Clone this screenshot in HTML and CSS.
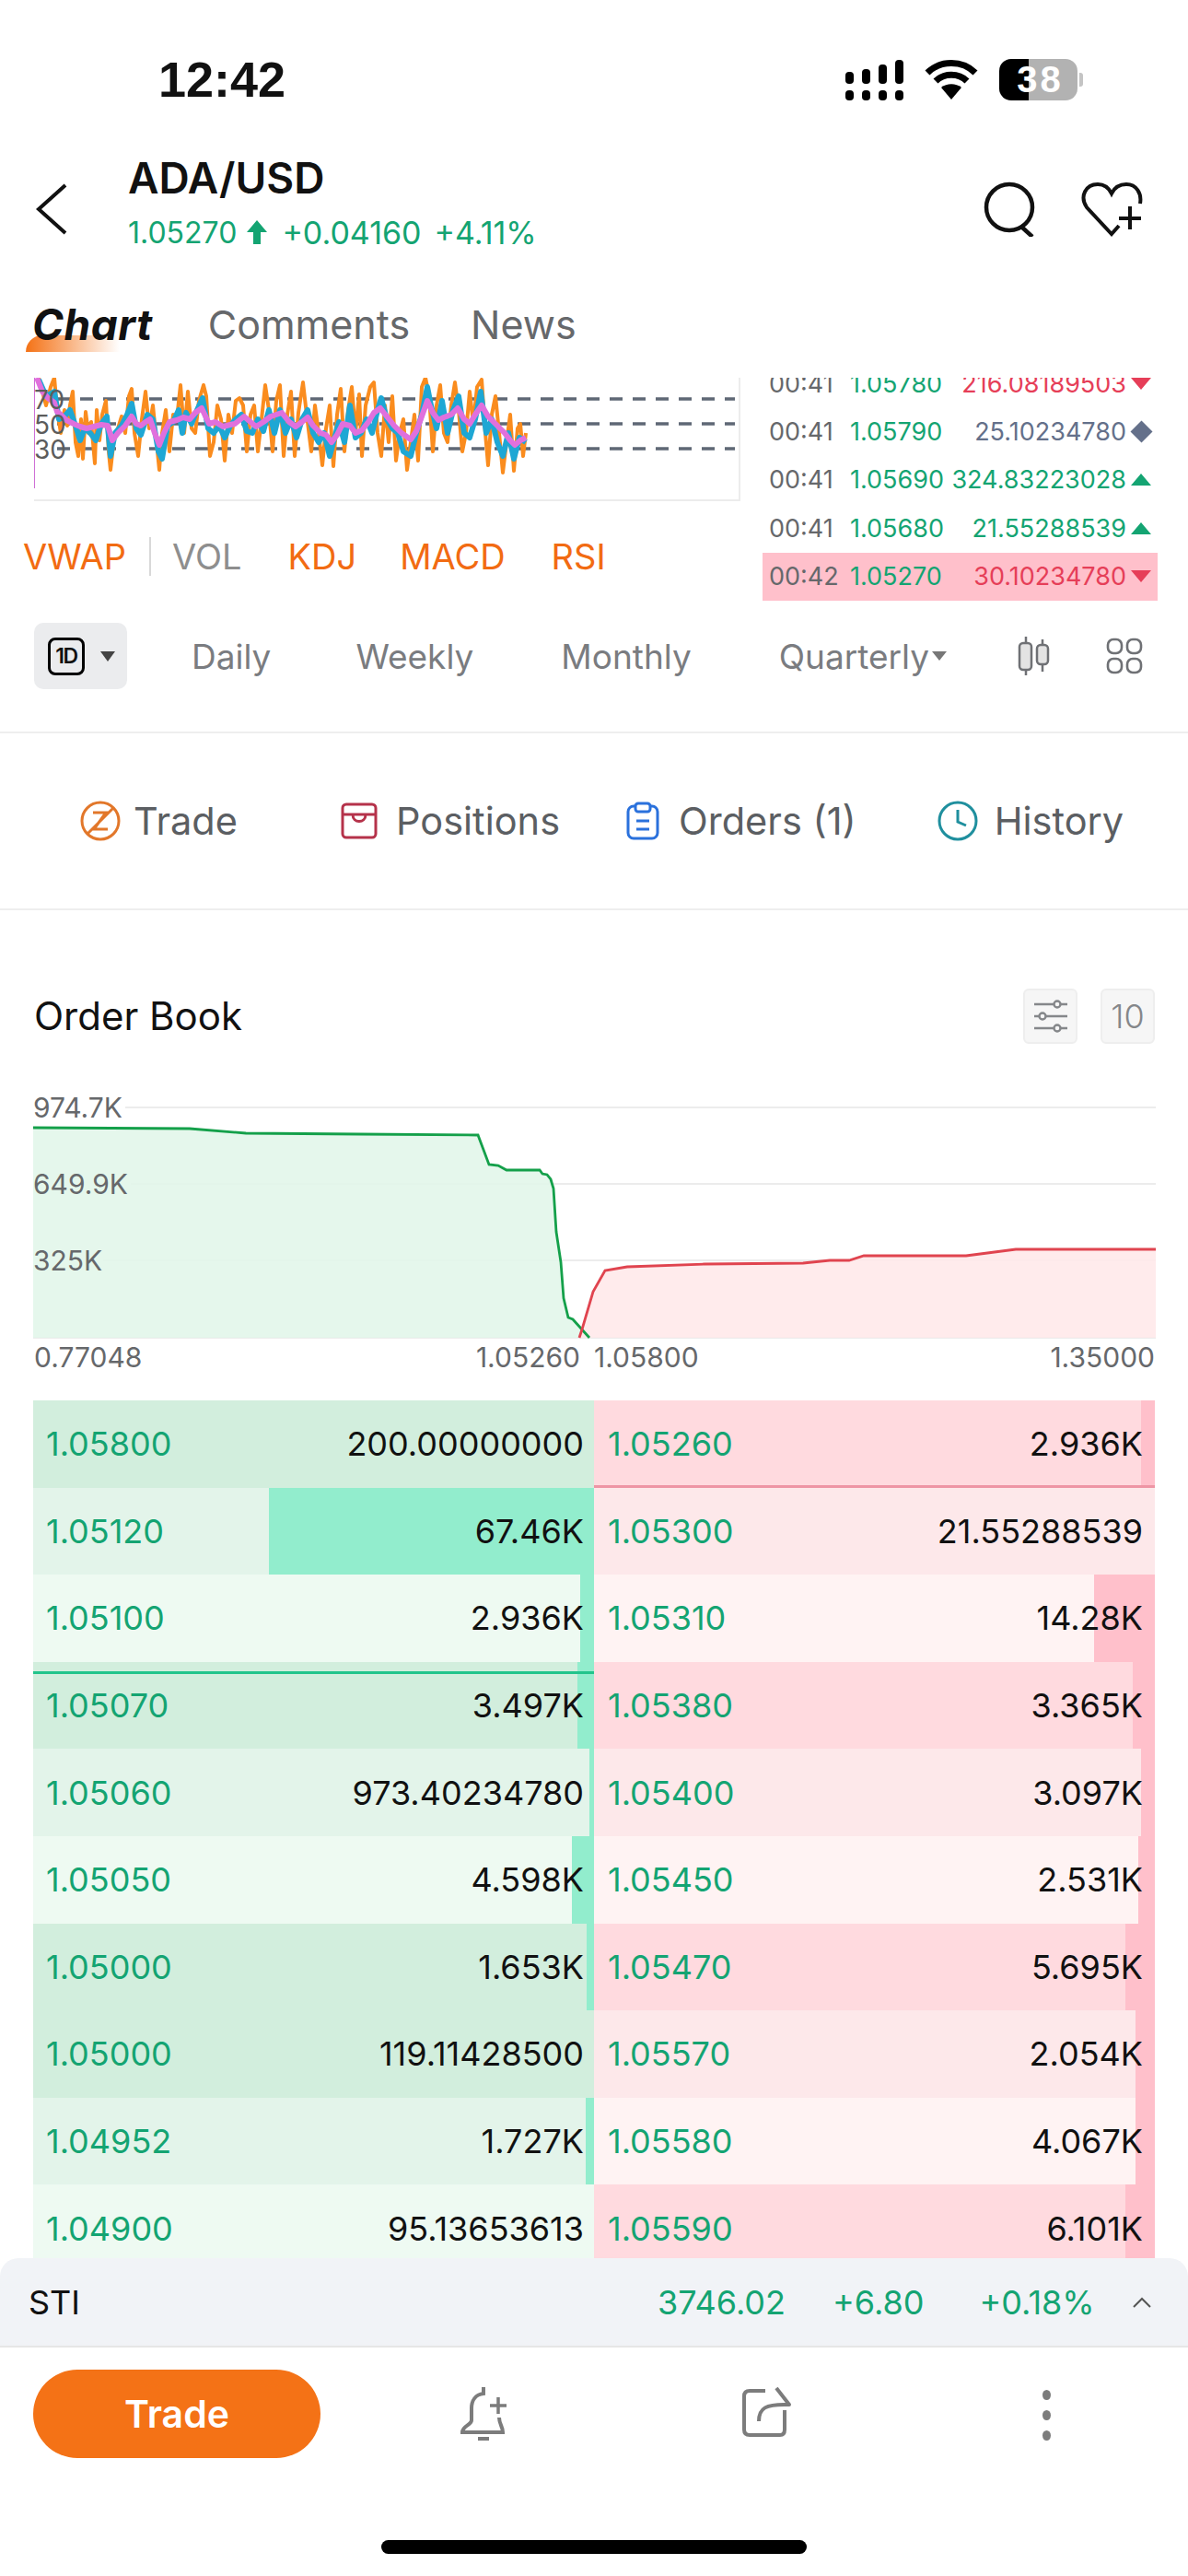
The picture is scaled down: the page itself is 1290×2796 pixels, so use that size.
FILE: index.html
```html
<!DOCTYPE html>
<html lang="en">
<head>
  <meta charset="UTF-8">
  <title>ADA/USD</title>
  <link rel="stylesheet" href="styles.css">
</head>
<body>
  <div class="status">
    <span class="clock">12:42</span>
    <svg class="signal" width="66" height="46" viewBox="0 0 66 46">
      <g fill="#000">
        <rect x="2" y="14" width="9" height="13" rx="4"/><rect x="2" y="34" width="9" height="11" rx="4"/>
        <rect x="20" y="11" width="9" height="16" rx="4"/><rect x="20" y="34" width="9" height="11" rx="4"/>
        <rect x="38" y="6" width="9" height="21" rx="4"/><rect x="38" y="34" width="9" height="11" rx="4"/>
        <rect x="56" y="1" width="9" height="26" rx="4"/><rect x="56" y="34" width="9" height="11" rx="4"/>
      </g>
    </svg>
    <svg class="wifi" width="60" height="44" viewBox="0 0 60 44">
      <g fill="none" stroke="#000" stroke-width="7">
        <path d="M4 15 C18 1 42 1 56 15"/>
        <path d="M13 24 C22 15 38 15 47 24"/>
      </g>
      <path d="M19 31 C25 26 35 26 41 31 L30 44 Z" fill="#000"/>
    </svg>
    <div class="battery">38</div>
  </div>

  <header class="top">
    <svg class="back" width="36" height="56" viewBox="0 0 36 56"><path d="M33 2 L4 28 L33 54" fill="none" stroke="#111" stroke-width="4"/></svg>
    <div class="pair">
      <div class="pair-name">ADA/USD</div>
      <div class="pair-price">
        <span>1.05270</span>
        <svg width="24" height="28" viewBox="0 0 24 28"><path d="M12 1 L23 14 H16 V27 H8 V14 H1 Z" fill="#14a472"/></svg>
        <span class="pair-chg">+0.04160</span>
        <span class="pair-chg">+4.11%</span>
      </div>
    </div>
    <svg class="search" width="60" height="60" viewBox="0 0 60 60">
      <g fill="none" stroke="#111" stroke-width="4.5"><ellipse cx="28" cy="28" rx="25" ry="25"/><path d="M40 48 L53 60"/></g>
    </svg>
    <svg class="fav" width="72" height="60" viewBox="0 0 72 60">
      <path d="M44 48 L36 57 L9 28 C1 16 8 3 21 3 C28 3 33 7 36 13 C39 7 45 3 52 3 C63 3 69 13 67 24" fill="none" stroke="#111" stroke-width="4"/>
      <path d="M56 27 V52 M44 40 H68" fill="none" stroke="#111" stroke-width="4"/>
    </svg>
  </header>

  <nav class="tabs">
    <a class="tab tab-on">Chart</a>
    <a class="tab">Comments</a>
    <a class="tab">News</a>
  </nav>

  <div class="market">
    <div class="market-left">
      <svg class="rsi" width="767" height="134" viewBox="37 410 767 134">
        <path d="M37 543 H803 V410" fill="none" stroke="#ececec" stroke-width="2"/>
        <g stroke="#5f6875" stroke-width="3.5" stroke-dasharray="14 11">
          <path d="M62 433 H798"/><path d="M62 460 H798"/><path d="M62 487 H798"/>
        </g>
        <polyline fill="none" stroke="#fa8c1e" stroke-width="4" stroke-linejoin="round" points="42,410 46,425 50,440 55,420 59,410 62,445 66,470 70,445 73,462 76,440 79,425 82,480 85,495 88,455 90,498 93,447 96,470 99,458 103,503 105,445 108,478 111,450 115,435 118,490 120,510 124,475 128,465 132,452 136,470 140,430 143,422 146,470 150,495 154,455 158,425 162,465 166,440 170,480 173,510 176,470 180,445 184,490 188,450 192,455 196,418 200,470 204,425 208,465 212,470 216,435 221,418 224,430 228,495 232,480 236,440 240,455 244,500 248,450 252,470 256,435 260,432 264,440 268,490 272,450 276,440 280,490 284,455 288,418 292,445 296,490 300,435 304,418 308,495 312,450 316,425 320,495 324,448 329,415 333,450 338,490 342,440 346,470 350,505 354,465 358,440 362,506 366,450 370,422 374,490 378,445 382,420 386,470 390,428 393,495 397,440 402,420 406,415 410,470 414,495 418,440 422,480 426,430 430,500 434,470 438,455 442,510 446,480 450,450 454,500 458,420 462,410 466,430 470,490 474,440 478,418 482,470 486,480 490,440 494,415 498,445 502,490 506,470 510,425 514,460 518,420 523,412 527,470 530,505 534,450 538,430 542,470 546,513 550,480 554,450 558,511 562,465 565,460 568,495 571,470"/>
        <polyline fill="none" stroke="#1ea7d4" stroke-width="6" stroke-linejoin="round" points="42,412 50,430 59,425 64,455 70,452 76,445 82,462 87,478 92,465 98,470 104,478 110,460 116,452 120,495 125,470 132,462 138,450 143,438 148,465 153,472 160,450 166,455 172,490 176,498 182,462 188,458 194,445 198,470 202,448 208,460 214,445 220,432 226,465 232,470 238,462 244,475 250,462 256,455 262,450 268,468 274,470 280,455 286,468 292,445 298,470 304,445 310,470 316,455 322,475 328,455 334,445 340,470 346,480 352,470 358,495 362,480 368,458 374,480 380,440 386,475 392,470 398,455 404,470 410,445 414,432 420,455 426,465 432,470 438,490 446,495 452,470 458,450 464,420 468,440 474,465 480,435 486,470 492,445 498,430 504,470 510,475 516,455 522,425 528,470 534,455 540,480 546,495 552,470 558,498 564,475 571,480"/>
        <polyline fill="none" stroke="#e070dd" stroke-width="6" stroke-linejoin="round" points="40,410 46,425 52,432 59,437 62,447 66,450 72,456 80,460 87,463 94,465 102,463 110,461 117,462 122,478 128,470 136,462 143,452 148,460 153,462 158,458 163,455 168,470 173,483 178,470 184,458 192,456 199,453 206,455 212,448 219,443 227,460 234,458 242,463 250,461 255,460 260,456 265,452 272,458 278,463 286,458 294,452 300,450 306,448 314,458 321,463 328,458 334,453 340,462 348,470 354,472 360,480 366,472 372,460 380,462 386,470 393,467 400,458 406,448 413,443 420,452 428,462 436,470 446,477 452,468 458,452 464,435 470,448 476,456 482,453 490,450 497,443 504,455 510,460 516,450 523,440 530,452 536,458 541,463 548,470 554,478 559,483 565,478 571,475"/>
        <path d="M37 410 V530" stroke="#cf6fd6" stroke-width="2"/>
        <g class="rsi-labels">
          <text x="37" y="444">70</text><text x="37" y="471">50</text><text x="37" y="498">30</text>
        </g>
      </svg>
      <div class="indicators">
        <span>VWAP</span>
        <i class="ind-sep"></i>
        <span class="ind-off">VOL</span>
        <span class="ind-kdj">KDJ</span>
        <span class="ind-macd">MACD</span>
        <span class="ind-rsi">RSI</span>
      </div>
    </div>
    <div class="ticks">
      <div class="tick"><span class="t-time">00:41</span><span class="t-price">1.05780</span><span class="t-vol sell">216.08189503</span><i class="tri tri-down"></i></div>
      <div class="tick"><span class="t-time">00:41</span><span class="t-price">1.05790</span><span class="t-vol flat">25.10234780</span><i class="diamond"></i></div>
      <div class="tick"><span class="t-time">00:41</span><span class="t-price">1.05690</span><span class="t-vol buy">324.83223028</span><i class="tri tri-up"></i></div>
      <div class="tick"><span class="t-time">00:41</span><span class="t-price">1.05680</span><span class="t-vol buy">21.55288539</span><i class="tri tri-up"></i></div>
      <div class="tick tick-new"><span class="t-time">00:42</span><span class="t-price">1.05270</span><span class="t-vol sell">30.10234780</span><i class="tri tri-down"></i></div>
    </div>
  </div>

  <div class="periods">
    <div class="period-pill">
      <span class="period-box">1D</span>
      <i class="caret-dark"></i>
    </div>
    <span class="period p-daily">Daily</span>
    <span class="period p-weekly">Weekly</span>
    <span class="period p-monthly">Monthly</span>
    <span class="period p-quarterly">Quarterly<i class="caret-grey"></i></span>
    <svg class="p-candle" width="36" height="42" viewBox="0 0 36 42">
      <g stroke="#6f7175" stroke-width="2.5" fill="#e3e3e3">
        <path d="M9 0 V42 M27 3 V38"/>
        <rect x="2" y="7" width="13" height="29" rx="4"/>
        <rect x="21" y="9" width="12" height="21" rx="4"/>
      </g>
    </svg>
    <svg class="p-grid" width="40" height="40" viewBox="0 0 40 40">
      <g fill="none" stroke="#6f7175" stroke-width="2.6">
        <rect x="2" y="2" width="15" height="15" rx="6"/><rect x="23" y="2" width="15" height="15" rx="6"/>
        <rect x="2" y="23" width="15" height="15" rx="6"/><rect x="23" y="23" width="15" height="15" rx="6"/>
      </g>
    </svg>
  </div>

  <div class="sections">
    <a class="sec sec-trade">
      <svg width="44" height="44" viewBox="0 0 44 44">
        <g fill="none" stroke="#e2772a" stroke-width="3">
          <circle cx="22" cy="22" r="20"/>
          <path d="M14 13 H28 L15 31 H30 M36 8 L8 36"/>
        </g>
      </svg>
      Trade
    </a>
    <a class="sec sec-pos">
      <svg width="40" height="40" viewBox="0 0 40 40">
        <g fill="none" stroke="#b5324a" stroke-width="3">
          <rect x="2" y="2" width="36" height="36" rx="4"/>
          <path d="M2 13 H38 M13 13 C13 23 27 23 27 13"/>
        </g>
      </svg>
      Positions
    </a>
    <a class="sec sec-orders">
      <svg width="36" height="42" viewBox="0 0 36 42">
        <g fill="none" stroke="#2a71dc" stroke-width="3">
          <rect x="2" y="5" width="32" height="35" rx="6"/>
          <rect x="10" y="2" width="16" height="9" rx="3" fill="#fff"/>
          <path d="M11 21 H25 M11 30 H25"/>
        </g>
      </svg>
      Orders (1)
    </a>
    <a class="sec sec-hist">
      <svg width="44" height="44" viewBox="0 0 44 44">
        <g fill="none" stroke="#1f8f9e" stroke-width="3">
          <circle cx="22" cy="22" r="20"/>
          <path d="M22 10 V23 L31 27"/>
        </g>
      </svg>
      History
    </a>
  </div>

  <div class="book-head">
    <h2>Order Book</h2>
    <span class="book-btn">
      <svg width="36" height="36" viewBox="0 0 36 36">
        <g stroke="#85878a" stroke-width="2.4" fill="#f6f6f6">
          <path d="M0 5 H36 M0 18 H36 M0 31 H36"/>
          <circle cx="25" cy="5" r="3.5"/><circle cx="9" cy="18" r="3.5"/><circle cx="25" cy="31" r="3.5"/>
        </g>
      </svg>
    </span>
    <span class="book-btn book-btn-num">10</span>
  </div>

  <svg class="depth" width="1220" height="387" viewBox="36 1133 1220 387">
    <g stroke="#ececec" stroke-width="2">
      <path d="M136 1202 H1255"/><path d="M142 1285 H1255"/><path d="M112 1368 H1255"/><path d="M36 1452 H1255"/>
    </g>
    <polygon fill="#e2f6ea" fill-opacity=".9" points="36,1224 206,1225 267,1230 391,1231 519,1232 531,1264 541,1265 550,1270 586,1270 589,1274 594,1275 598,1280 601,1290 604,1337 609,1370 612,1409 617,1430 622,1432 640,1452 36,1452"/>
    <polygon fill="#ffe9ea" fill-opacity=".9" points="629,1452 632,1443 644,1402 657,1379 681,1375 765,1372 872,1371 901,1368 922,1368 938,1363 1049,1363 1103,1356 1152,1356 1255,1356 1255,1452"/>
    <polyline fill="none" stroke="#14a04a" stroke-width="2.8" points="36,1224 206,1225 267,1230 391,1231 519,1232 531,1264 541,1265 550,1270 586,1270 589,1274 594,1275 598,1280 601,1290 604,1337 609,1370 612,1409 617,1430 622,1432 640,1452"/>
    <polyline fill="none" stroke="#e0444f" stroke-width="2.8" points="629,1452 632,1443 644,1402 657,1379 681,1375 765,1372 872,1371 901,1368 922,1368 938,1363 1049,1363 1103,1356 1152,1356 1255,1356"/>
    <g class="depth-labels">
      <text x="36" y="1213">974.7K</text>
      <text x="36" y="1296">649.9K</text>
      <text x="36" y="1379">325K</text>
      <text x="37" y="1484">0.77048</text>
      <text x="630" y="1484" text-anchor="end">1.05260</text>
      <text x="645" y="1484">1.05800</text>
      <text x="1254" y="1484" text-anchor="end">1.35000</text>
    </g>
  </svg>

  <div class="book">
    <div class="level"><div class="side bid"><span class="px">1.05800</span><span class="qty">200.00000000</span></div><div class="side ask"><i class="bar" style="width:15px"></i><span class="px">1.05260</span><span class="qty">2.936K</span><i class="mark mark-ask"></i></div></div>
    <div class="level"><div class="side bid"><i class="bar" style="width:353px"></i><span class="px">1.05120</span><span class="qty">67.46K</span></div><div class="side ask"><span class="px">1.05300</span><span class="qty">21.55288539</span></div></div>
    <div class="level"><div class="side bid"><i class="bar" style="width:15px"></i><span class="px">1.05100</span><span class="qty">2.936K</span></div><div class="side ask"><i class="bar" style="width:66px"></i><span class="px">1.05310</span><span class="qty">14.28K</span></div></div>
    <div class="level"><div class="side bid"><i class="bar" style="width:18px"></i><span class="px">1.05070</span><span class="qty">3.497K</span><i class="mark mark-bid"></i></div><div class="side ask"><i class="bar" style="width:24px"></i><span class="px">1.05380</span><span class="qty">3.365K</span></div></div>
    <div class="level"><div class="side bid"><i class="bar" style="width:5px"></i><span class="px">1.05060</span><span class="qty">973.40234780</span></div><div class="side ask"><i class="bar" style="width:15px"></i><span class="px">1.05400</span><span class="qty">3.097K</span></div></div>
    <div class="level"><div class="side bid"><i class="bar" style="width:24px"></i><span class="px">1.05050</span><span class="qty">4.598K</span></div><div class="side ask"><i class="bar" style="width:18px"></i><span class="px">1.05450</span><span class="qty">2.531K</span></div></div>
    <div class="level"><div class="side bid"><i class="bar" style="width:8px"></i><span class="px">1.05000</span><span class="qty">1.653K</span></div><div class="side ask"><i class="bar" style="width:32px"></i><span class="px">1.05470</span><span class="qty">5.695K</span></div></div>
    <div class="level"><div class="side bid"><span class="px">1.05000</span><span class="qty">119.11428500</span></div><div class="side ask"><i class="bar" style="width:21px"></i><span class="px">1.05570</span><span class="qty">2.054K</span></div></div>
    <div class="level"><div class="side bid"><i class="bar" style="width:9px"></i><span class="px">1.04952</span><span class="qty">1.727K</span></div><div class="side ask"><i class="bar" style="width:21px"></i><span class="px">1.05580</span><span class="qty">4.067K</span></div></div>
    <div class="level"><div class="side bid"><span class="px">1.04900</span><span class="qty">95.13653613</span></div><div class="side ask"><i class="bar" style="width:32px"></i><span class="px">1.05590</span><span class="qty">6.101K</span></div></div>
  </div>

  <div class="index-bar">
    <span class="idx-name">STI</span>
    <span class="idx-val">3746.02</span>
    <span class="idx-chg">+6.80</span>
    <span class="idx-pct">+0.18%</span>
    <svg width="20" height="12" viewBox="0 0 20 12"><path d="M1 11 L10 2 L19 11" fill="none" stroke="#555" stroke-width="2"/></svg>
  </div>

  <div class="actions">
    <button class="trade-btn">Trade</button>
    <svg class="act-bell" width="60" height="60" viewBox="0 0 60 60">
      <g fill="none" stroke="#7c7c7c" stroke-width="4">
        <path d="M30 1 V8 C21 9 17 16 17 24 V37 C17 42 7 43 7 50 H51 C51 44 47 41 47 34"/>
        <path d="M24 57 H36"/>
        <path d="M46 12 V30 M37 21 H55" stroke-width="3.5"/>
      </g>
    </svg>
    <svg class="act-share" width="56" height="56" viewBox="0 0 56 56">
      <g fill="none" stroke="#7c7c7c" stroke-width="4">
        <path d="M26 5 H9 C5 5 3 7 3 11 V47 C3 51 5 53 9 53 H42 C45 53 47 51 47 47 V26"/>
        <path d="M19 38 C19 24 26 19 52 20 L38 2" stroke-linejoin="round"/>
      </g>
    </svg>
    <div class="act-more"><i></i><i></i><i></i></div>
  </div>

  <div class="home-row"><div class="home-bar"></div></div>
</body>
</html>
```

FILE: styles.css
```css
* { box-sizing: border-box; }
html, body { margin: 0; padding: 0; }
body { width: 1290px; height: 2796px; overflow: hidden; background: #fff; font-family: Inter, "Liberation Sans", sans-serif; color: #111; }
svg { display: block; flex: none; }
i { font-style: normal; display: block; }

/* status bar */
.status { height: 166px; padding-top: 6px; display: flex; align-items: center; }
.clock { margin-left: 172px; font: bold 54px "Liberation Sans", sans-serif; width: 744px; }
.wifi { margin-left: 21px; }
.signal { margin-top: 1px; }
.battery { position: relative; margin-left: 22px; width: 85px; height: 45px; border-radius: 13px; background: linear-gradient(90deg, #000 32px, #b2b2b2 32px); color: #fff; font: bold 40px/45px "Liberation Sans", sans-serif; text-align: center; letter-spacing: 3px; padding-left: 4px; }
.battery::after { content: ""; position: absolute; left: 87px; top: 15px; width: 4px; height: 15px; border-radius: 0 3px 3px 0; background: #c4c4c4; }

/* header */
.top { height: 122px; display: flex; align-items: center; }
.back { margin-left: 38px; margin-right: 65px; }
.pair { width: 929px; }
.pair-name { font-size: 46px; font-weight: 600; line-height: 50px; }
.pair-price { display: flex; align-items: center; height: 68px; font-size: 32px; color: #14a472; }
.pair-price svg { margin: 0 15px 0 10px; }
.pair-chg { margin-right: 14px; font-size: 34px; }
.fav { margin-left: 43px; }

/* tabs */
.tabs { height: 122px; padding: 6px 0 0 35px; display: flex; align-items: center; }
.tab { position: relative; font-size: 43px; color: #66686b; margin-right: 66px; }
.tab-on { z-index: 0; margin-right: 60px; color: #111; font-size: 46px; font-weight: 700; font-style: italic; letter-spacing: .5px; }
.tab-on::before { content: ""; position: absolute; z-index: -1; left: -7px; top: 40px; width: 102px; height: 18px; border-radius: 18px 0 0 0; background: linear-gradient(90deg, #f47216, #fff); }

/* chart + ticks */
.market { height: 254px; display: flex; overflow: hidden; }
.market-left { width: 803px; margin-left: 25px; flex: none; }
.rsi { margin-left: 12px; }
.rsi-labels text { font-size: 28px; fill: #5c5c5c; }
.indicators { height: 120px; display: flex; align-items: center; font-size: 38px; color: #f26b12; }
.ind-sep { width: 2px; height: 42px; margin: 0 23px 0 25px; background: #d8d8d8; }
.ind-off { color: #8e8e8e; }
.ind-kdj { margin-left: 50px; }
.ind-macd { margin-left: 47px; }
.ind-rsi { margin-left: 50px; }
.ticks { margin: -20px 0 0 0; width: 429px; flex: none; height: 272px; font-size: 27px; }
.tick { height: 52.4px; padding: 0 7px; display: flex; align-items: center; }
.tick-new { background: #ffc0cb; }
.t-time { width: 88px; flex: none; color: #66686b; }
.t-price { width: 108px; flex: none; color: #14a472; white-space: nowrap; }
.t-vol { flex: 1; text-align: right; white-space: nowrap; }
.sell { color: #e63e58; }
.flat { color: #64708a; }
.buy { color: #14a472; }
.tri { flex: none; margin-left: 5px; width: 0; height: 0; border-left: 11px solid transparent; border-right: 11px solid transparent; }
.tri-down { border-top: 13px solid #e63e58; }
.tri-up { border-bottom: 13px solid #14a472; }
.diamond { flex: none; margin: 0 2.5px 0 7.5px; width: 17px; height: 17px; background: #64708a; transform: rotate(45deg); }

/* period row */
.periods { height: 132px; padding-bottom: 34px; border-bottom: 2px solid #eee; display: flex; align-items: center; padding-left: 37px; }
.period-pill { width: 101px; height: 72px; border-radius: 10px; background: #ebecee; display: flex; align-items: center; padding-left: 15px; }
.period-box { width: 40px; height: 41px; border: 3.5px solid #000; border-radius: 8px; font: 600 23px/34px Inter, sans-serif; text-align: center; letter-spacing: -1.5px; }
.caret-dark { margin-left: 17px; width: 0; height: 0; border-left: 8.5px solid transparent; border-right: 8.5px solid transparent; border-top: 11px solid #444; }
.period { font-size: 37px; color: #7a7c80; white-space: nowrap; }
.p-daily { margin-left: 70px; }
.p-weekly { margin-left: 92px; }
.p-monthly { margin-left: 95px; }
.p-quarterly { margin-left: 95px; display: flex; align-items: center; }
.caret-grey { margin-left: 3px; width: 0; height: 0; border-left: 8px solid transparent; border-right: 8px solid transparent; border-top: 10px solid #777; }
.p-candle { margin-left: 77px; }
.p-grid { margin-left: 60px; }

/* section tabs */
.sections { height: 192px; border-bottom: 2px solid #eee; display: flex; align-items: center; }
.sec { display: flex; align-items: center; font-size: 41.5px; color: #5b5e62; white-space: nowrap; }
.sec-trade { margin-left: 87px; gap: 14px; }
.sec-pos { margin-left: 112px; gap: 20px; }
.sec-orders { margin-left: 72px; gap: 21px; }
.sec-hist { margin-left: 88px; gap: 18px; }

/* order book */
.book-head { height: 145px; padding: 85px 36px 0 37px; display: flex; }
.book-head h2 { margin: 0 auto 0 0; font-size: 42px; font-weight: 400; line-height: 60px; color: #111; }
.book-btn { width: 59px; height: 60px; margin-left: 25px; border: 2px solid #eee; border-radius: 6px; background: #f6f6f6; display: flex; align-items: center; justify-content: center; }
.book-btn-num { font-size: 36px; font-weight: 300; color: #85878a; }
.depth { margin-left: 36px; }
.depth-labels text { font-size: 30px; fill: #66686b; }
.book { height: 931px; margin: 0 36px; overflow: hidden; }
.level { height: 94.6px; display: flex; font-size: 36px; }
.side { position: relative; z-index: 0; width: 50%; display: flex; align-items: center; justify-content: space-between; }
.bid { padding: 0 11px 0 14px; }
.ask { padding: 0 13px 0 15px; }
.px { color: #14a472; }
.qty { color: #111; }
.bar { position: absolute; z-index: -1; right: 0; top: 0; bottom: 0; }
.bid .bar { background: #92edcd; }
.ask .bar { background: #ffc0cb; }
.level:nth-child(3n+1) .bid { background: #d2eedd; }
.level:nth-child(3n+2) .bid { background: #e3f4ea; }
.level:nth-child(3n) .bid { background: #eefaf2; }
.level:nth-child(8) .bid { background: #d2eedd; }
.level:nth-child(9) .bid { background: #e3f4ea; }
.level:nth-child(10) .bid { background: #eefaf2; }
.level:nth-child(3n+1) .ask { background: #ffdadf; }
.level:nth-child(3n+2) .ask { background: #fde8ea; }
.level:nth-child(3n) .ask { background: #fff3f3; }
.mark { position: absolute; left: 0; right: 0; height: 3px; }
.mark-ask { bottom: 0; background: #ee95a5; }
.mark-bid { top: 10px; background: #22c48c; }

/* index strip */
.index-bar { height: 97px; border-radius: 20px 20px 0 0; border-bottom: 2px solid #e6e6e6; background: #f1f3f7; display: flex; align-items: center; padding-left: 31px; font-size: 36px; color: #14a472; }
.idx-name { width: 683px; color: #111; }
.idx-chg { margin-left: 51px; }
.idx-pct { margin-left: 60px; }
.index-bar svg { margin-left: 41px; }

/* bottom actions */
.actions { height: 209px; padding: 24px 0 0 36px; display: flex; align-items: flex-start; }
.trade-btn { width: 312px; height: 96px; border: 0; border-radius: 48px; background: #f47216; color: #fff; font: 600 41px Inter, sans-serif; }
.act-bell { margin: 18px 0 0 147px; }
.act-share { margin: 18px 0 0 250px; }
.act-more { margin: 22px 0 0 271px; display: flex; flex-direction: column; gap: 11px; }
.act-more i { width: 9px; height: 11px; border-radius: 50%; background: #7c7c7c; }
.home-row { display: flex; justify-content: center; }
.home-bar { width: 462px; height: 15px; border-radius: 8px; background: #000; }
```
